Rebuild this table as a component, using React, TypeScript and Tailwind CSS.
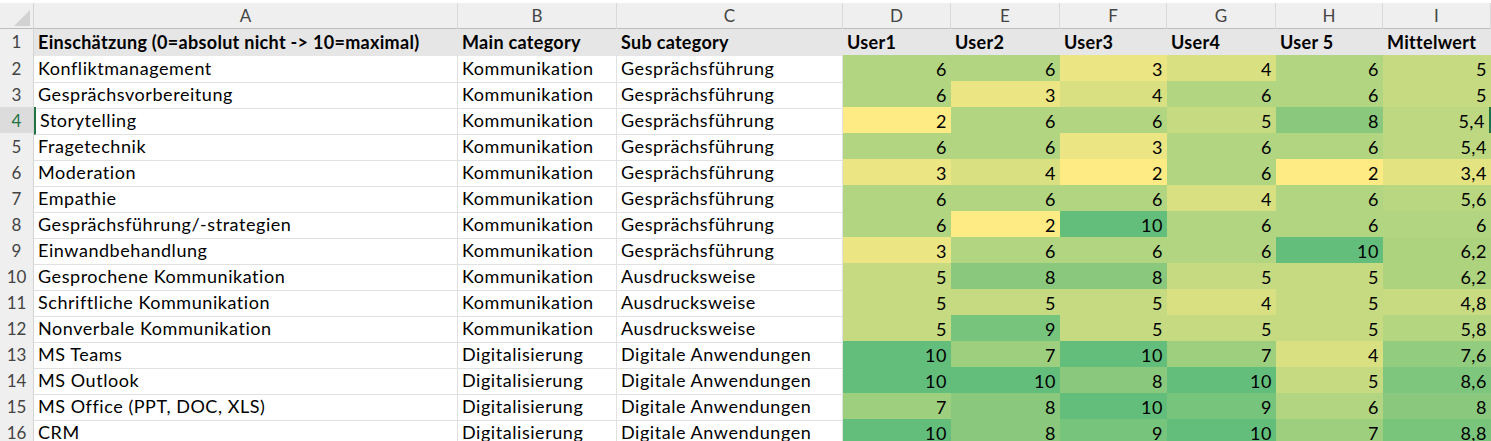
import React from 'react'

type Row = {
  name: string
  main: string
  sub: string
  scores: number[]
  avg: string
}

const K = 'Kommunikation'
const G = 'Gesprächsführung'
const A = 'Ausdrucksweise'
const D = 'Digitalisierung'
const DA = 'Digitale Anwendungen'

const rows: Row[] = [
  { name: 'Konfliktmanagement', main: K, sub: G, scores: [6, 6, 3, 4, 6], avg: '5' },
  { name: 'Gesprächsvorbereitung', main: K, sub: G, scores: [6, 3, 4, 6, 6], avg: '5' },
  { name: 'Storytelling', main: K, sub: G, scores: [2, 6, 6, 5, 8], avg: '5,4' },
  { name: 'Fragetechnik', main: K, sub: G, scores: [6, 6, 3, 6, 6], avg: '5,4' },
  { name: 'Moderation', main: K, sub: G, scores: [3, 4, 2, 6, 2], avg: '3,4' },
  { name: 'Empathie', main: K, sub: G, scores: [6, 6, 6, 4, 6], avg: '5,6' },
  { name: 'Gesprächsführung/-strategien', main: K, sub: G, scores: [6, 2, 10, 6, 6], avg: '6' },
  { name: 'Einwandbehandlung', main: K, sub: G, scores: [3, 6, 6, 6, 10], avg: '6,2' },
  { name: 'Gesprochene Kommunikation', main: K, sub: A, scores: [5, 8, 8, 5, 5], avg: '6,2' },
  { name: 'Schriftliche Kommunikation', main: K, sub: A, scores: [5, 5, 5, 4, 5], avg: '4,8' },
  { name: 'Nonverbale Kommunikation', main: K, sub: A, scores: [5, 9, 5, 5, 5], avg: '5,8' },
  { name: 'MS Teams', main: D, sub: DA, scores: [10, 7, 10, 7, 4], avg: '7,6' },
  { name: 'MS Outlook', main: D, sub: DA, scores: [10, 10, 8, 10, 5], avg: '8,6' },
  { name: 'MS Office (PPT, DOC, XLS)', main: D, sub: DA, scores: [7, 8, 10, 9, 6], avg: '8' },
  { name: 'CRM', main: D, sub: DA, scores: [10, 8, 9, 10, 7], avg: '8,8' },
]

// green-yellow colour scale, min 2 -> yellow, max 10 -> green
function scale(v: number) {
  const t = Math.min(1, Math.max(0, (v - 2) / 8))
  const r = Math.round(255 + (99 - 255) * t)
  const g = Math.round(235 + (190 - 235) * t)
  const b = Math.round(132 + (123 - 132) * t)
  return `rgb(${r}, ${g}, ${b})`
}

const letters = ['A', 'B', 'C', 'D', 'E', 'F', 'G', 'H', 'I']
const headers = ['Einschätzung (0=absolut nicht -> 10=maximal)', 'Main category', 'Sub category', 'User1', 'User2', 'User3', 'User4', 'User 5', 'Mittelwert']

const cols = 'grid grid-cols-[34px_424px_159px_226px_108px_109px_107px_109px_107px_1fr]'

export default function App() {
  return (
    <div className="h-[441px] w-[1491px] overflow-hidden bg-white text-[18px] text-black" style={{ fontFamily: 'Lato, "Liberation Sans", sans-serif' }}>
      <div className="h-[3px] bg-white" />
      {/* column letters */}
      <div className={`${cols} h-[26px] border-b border-[#bdbdbd] bg-[#efefef] text-[#444]`}>
        <div className="flex items-end justify-end border-r border-[#d4d4d4] pb-[3px] pr-[3px]">
          <svg width="16" height="16" viewBox="0 0 16 16">
            <polygon points="16,0 16,16 0,16" fill="#d2d2d2" />
          </svg>
        </div>
        {letters.map((l) => (
          <div key={l} className="flex items-center justify-center border-r border-[#d9d9d9] text-[17px]">
            {l}
          </div>
        ))}
      </div>

      {/* row 1 */}
      <div className={`${cols} h-[26px]`}>
        <div className="flex items-center justify-center border-r border-b border-[#d4d4d4] bg-[#efefef] text-[17px] text-[#444]">1</div>
        {headers.map((h) => (
          <div key={h} className="flex items-center overflow-hidden whitespace-nowrap bg-[#e6e6e6] pl-[4px] font-bold tracking-[0.3px]">
            {h}
          </div>
        ))}
      </div>

      {rows.map((r, i) => {
        const n = i + 2
        const active = n === 4
        return (
          <div key={n} className={`${cols} h-[26px] tracking-[0.55px]`}>
            <div
              className={`flex items-center justify-center border-r border-b border-[#d4d4d4] text-[17px] tracking-normal ${active ? 'bg-[#dcdcdc] text-[#217346]' : 'bg-[#efefef] text-[#444]'}`}
            >
              {n}
            </div>
            <div className={`flex items-center whitespace-nowrap border-r border-b border-[#e1e1e1] pl-[4px] ${active ? 'border-l-2 border-l-[#217346] pl-[2px]' : ''}`}>
              {r.name}
            </div>
            <div className="flex items-center whitespace-nowrap border-r border-b border-[#e1e1e1] pl-[4px]">{r.main}</div>
            <div className="flex items-center whitespace-nowrap border-r border-b border-[#e1e1e1] pl-[4px]">{r.sub}</div>
            {r.scores.map((s, j) => (
              <div key={j} className="flex items-center justify-end pr-[4px]" style={{ backgroundColor: scale(s) }}>
                {s}
              </div>
            ))}
            <div
              className={`flex items-center justify-end pr-[4px] ${active ? 'border-r-2 border-[#217346]' : ''}`}
              style={{ backgroundColor: scale(parseFloat(r.avg.replace(',', '.'))) }}
            >
              {r.avg}
            </div>
          </div>
        )
      })}
    </div>
  )
}
